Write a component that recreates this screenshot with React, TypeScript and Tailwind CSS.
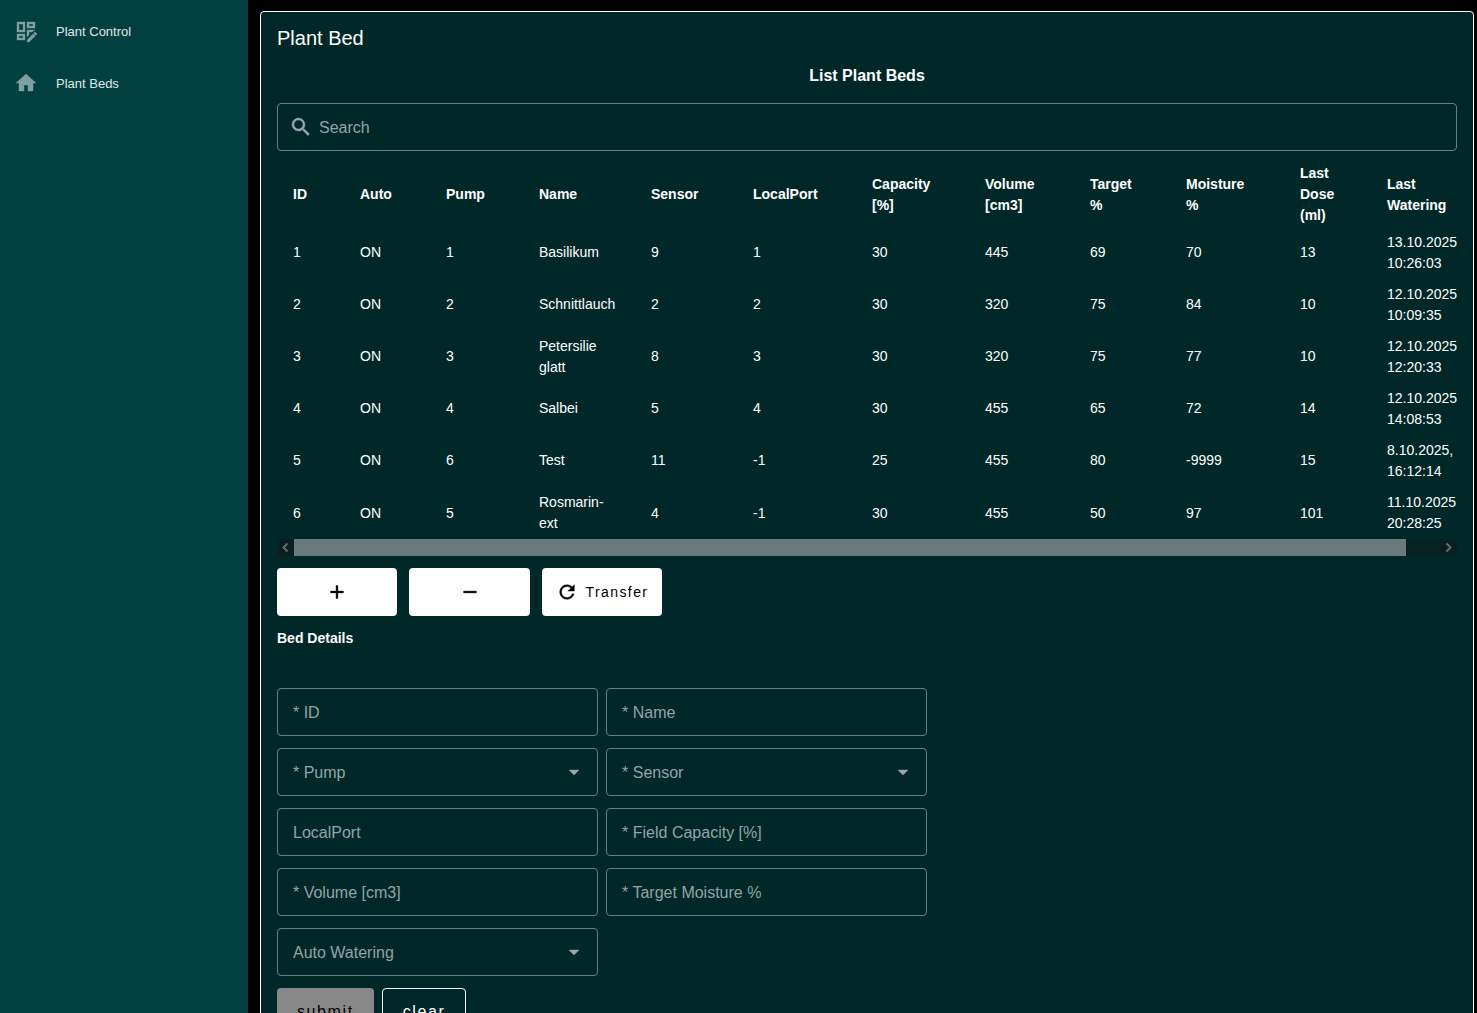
import { useRef } from "react";

const icons = {
  dashboardEdit:
    "M21 13.1c-.1 0-.3.1-.4.2l-1 1 2.1 2.1 1-1c.2-.2.2-.6 0-.8l-1.3-1.3c-.1-.1-.2-.2-.4-.2m-1.9 1.8-6.1 6V23h2.1l6.1-6.1-2.1-2M21 3h-8v6h8V3m-2 4h-4V5h4v2m-6 11.06V11h8v.1c-.76 0-1.43.4-1.81.79L18.07 13H15v3.07l-2 1.99M11 3H3v10h8V3m-2 8H5V5h4v6m2 9.06V15H3v6h8v-.94M9 19H5v-2h4v2Z",
  home: "M10,20V14H14V20H19V12H22L12,3L2,12H5V20H10Z",
  magnify:
    "M9.5,3A6.5,6.5 0 0,1 16,9.5C16,11.11 15.41,12.59 14.44,13.73L14.71,14H15.5L20.5,19L19,20.5L14,15.5V14.71L13.73,14.44C12.59,15.41 11.11,16 9.5,16A6.5,6.5 0 0,1 3,9.5A6.5,6.5 0 0,1 9.5,3M9.5,5C7,5 5,7 5,9.5C5,12 7,14 9.5,14C12,14 14,12 14,9.5C14,7 12,5 9.5,5Z",
  plus: "M19,13H13V19H11V13H5V11H11V5H13V11H19V13Z",
  minus: "M19,13H5V11H19V13Z",
  refresh:
    "M17.65,6.35C16.2,4.9 14.21,4 12,4A8,8 0 0,0 4,12A8,8 0 0,0 12,20C15.73,20 18.84,17.45 19.73,14H17.65C16.83,16.33 14.61,18 12,18A6,6 0 0,1 6,12A6,6 0 0,1 12,6C13.66,6 15.14,6.69 16.22,7.78L13,11H20V4L17.65,6.35Z",
  menuDown: "M7,10L12,15L17,10H7Z",
};

function Icon({ name, className }: { name: keyof typeof icons; className: string }) {
  return (
    <svg viewBox="0 0 24 24" fill="currentColor" stroke="currentColor" strokeWidth="0.4" aria-hidden="true" className={className}>
      <path d={icons[name]} />
    </svg>
  );
}

const columns = [
  { lines: ["ID"], width: "w-[67px]" },
  { lines: ["Auto"], width: "w-[86px]" },
  { lines: ["Pump"], width: "w-[93px]" },
  { lines: ["Name"], width: "w-[112px]" },
  { lines: ["Sensor"], width: "w-[102px]" },
  { lines: ["LocalPort"], width: "w-[119px]" },
  { lines: ["Capacity", "[%]"], width: "w-[113px]" },
  { lines: ["Volume", "[cm3]"], width: "w-[105px]" },
  { lines: ["Target", "%"], width: "w-[96px]" },
  { lines: ["Moisture", "%"], width: "w-[114px]" },
  { lines: ["Last", "Dose", "(ml)"], width: "w-[87px]" },
  { lines: ["Last", "Watering"], width: "w-[122px]" },
];

const beds = [
  ["1", "ON", "1", "Basilikum", "9", "1", "30", "445", "69", "70", "13", "13.10.2025, 10:26:03"],
  ["2", "ON", "2", "Schnittlauch", "2", "2", "30", "320", "75", "84", "10", "12.10.2025, 10:09:35"],
  ["3", "ON", "3", "Petersilie glatt", "8", "3", "30", "320", "75", "77", "10", "12.10.2025, 12:20:33"],
  ["4", "ON", "4", "Salbei", "5", "4", "30", "455", "65", "72", "14", "12.10.2025, 14:08:53"],
  ["5", "ON", "6", "Test", "11", "-1", "25", "455", "80", "-9999", "15", "8.10.2025, 16:12:14"],
  ["6", "ON", "5", "Rosmarin-ext", "4", "-1", "30", "455", "50", "97", "101", "11.10.2025, 20:28:25"],
];

const fields = [
  { id: "bed-id", label: "* ID" },
  { id: "bed-name", label: "* Name" },
  { id: "bed-pump", label: "* Pump", options: ["1", "2", "3", "4", "5", "6"] },
  { id: "bed-sensor", label: "* Sensor", options: ["2", "4", "5", "8", "9", "11"] },
  { id: "bed-port", label: "LocalPort" },
  { id: "bed-capacity", label: "* Field Capacity [%]" },
  { id: "bed-volume", label: "* Volume [cm3]" },
  { id: "bed-target", label: "* Target Moisture %" },
  { id: "bed-auto", label: "Auto Watering", options: ["ON", "OFF"] },
];

function Field({ id, label, options }: { id: string; label: string; options?: string[] }) {
  return (
    <div className="relative h-12 rounded border border-[#667e7e] text-base">
      {options ? (
        <>
          <select
            id={id}
            required
            defaultValue=""
            className="peer h-full w-full appearance-none rounded bg-transparent px-[15px] text-white outline-none"
          >
            <option value="" hidden></option>
            {options.map((o) => (
              <option key={o} className="text-black">
                {o}
              </option>
            ))}
          </select>
          <Icon
            name="menuDown"
            className="pointer-events-none absolute inset-y-0 right-[11px] my-auto size-6 text-[#99a9a9]"
          />
        </>
      ) : (
        <input
          id={id}
          placeholder=" "
          className="peer h-full w-full rounded bg-transparent px-[15px] text-white outline-none"
        />
      )}
      <label
        htmlFor={id}
        className={
          options
            ? "pointer-events-none absolute inset-y-0 left-[15px] flex items-center pt-0.5 text-[#93a4a4] peer-valid:hidden"
            : "pointer-events-none absolute inset-y-0 left-[15px] flex items-center pt-0.5 text-[#93a4a4] peer-[:not(:placeholder-shown)]:hidden"
        }
      >
        {label}
      </label>
    </div>
  );
}

function Chevron({ d }: { d: string }) {
  return (
    <svg viewBox="0 0 17 17" className="size-[17px]" fill="none" stroke="#5f7070" strokeWidth="2" aria-hidden="true">
      <path d={d} />
    </svg>
  );
}

export default function App() {
  const scroller = useRef<HTMLDivElement>(null);
  const scroll = (left: number) => scroller.current?.scrollBy({ left });

  return (
    <div className="flex h-screen overflow-hidden bg-black font-['Liberation_Sans',Arial,sans-serif] text-white">
      <nav className="w-[248px] shrink-0 bg-[#004040] py-[5px] text-[13px] text-[#e0e8e8]">
        <a href="#control" className="flex h-[52px] items-center gap-[18px] pl-[14px]">
          <Icon name="dashboardEdit" className="size-6 text-[#80a0a0]" />
          <span className="pt-0.5">Plant Control</span>
        </a>
        <a href="#beds" className="flex h-[52px] items-center gap-[18px] pl-[14px]">
          <Icon name="home" className="size-6 text-[#80a0a0]" />
          <span className="pt-0.5">Plant Beds</span>
        </a>
      </nav>

      <main className="min-w-0 flex-1 pt-[11px] pr-[3px] pl-3">
        <section className="rounded border border-white bg-[#002828] px-4 pb-4">
          <h1 className="pt-2.5 text-xl leading-8">Plant Bed</h1>
          <h2 className="pt-2.5 text-center text-base leading-6 font-bold">List Plant Beds</h2>

          <label className="mt-[15px] flex h-12 items-center gap-1.5 rounded border border-[#667e7e] px-[11px] text-base">
            <Icon name="magnify" className="size-6 text-[#99a9a9]" />
            <input
              type="search"
              aria-label="Search"
              placeholder="Search"
              className="min-w-0 flex-1 bg-transparent pt-0.5 outline-none placeholder:text-[#93a4a4]"
            />
          </label>

          <div ref={scroller} className="mt-3 overflow-hidden">
            <table className="w-full min-w-[1216px] table-fixed border-separate border-spacing-0 text-left text-sm leading-[21px]">
              <thead>
                <tr>
                  {columns.map((c) => (
                    <th
                      key={c.lines.join(" ")}
                      scope="col"
                      className={`${c.width} border-b border-[#002424] px-4 py-0 align-middle font-bold`}
                    >
                      {c.lines.map((line) => (
                        <span key={line} className="block">
                          {line}
                        </span>
                      ))}
                    </th>
                  ))}
                </tr>
              </thead>
              <tbody>
                {beds.map((bed) => (
                  <tr key={bed[0]} className="group">
                    {bed.map((cell, i) => (
                      <td key={i} className="h-[52px] border-b border-[#002424] px-4 group-last:border-0">
                        {cell}
                      </td>
                    ))}
                  </tr>
                ))}
              </tbody>
            </table>
          </div>
          <div className="flex h-[17px] bg-[#082222]">
            <button type="button" aria-label="Scroll left" onClick={() => scroll(-40)} className="bg-[#0a1f20]">
              <Chevron d="M10.500 4.500 6.500 8.500 10.500 12.500" />
            </button>
            <div className="flex flex-1">
              <div className="w-[97%] bg-[#697a7c]" />
            </div>
            <button type="button" aria-label="Scroll right" onClick={() => scroll(40)} className="bg-[#0a1f20]">
              <Chevron d="M6.500 4.500 10.500 8.500 6.500 12.500" />
            </button>
          </div>

          <div className="mt-3 flex gap-3 text-sm text-black">
            <button type="button" aria-label="Add bed" className="flex h-12 w-[120px] items-center justify-center rounded bg-white">
              <Icon name="plus" className="size-[22px]" />
            </button>
            <button type="button" aria-label="Remove bed" className="flex h-12 w-[121px] items-center justify-center rounded bg-white">
              <Icon name="minus" className="size-[22px]" />
            </button>
            <button type="button" className="flex h-12 w-[120px] items-center justify-center gap-2 rounded bg-white tracking-widest">
              <Icon name="refresh" className="size-[22px]" />
              Transfer
            </button>
          </div>

          <h3 className="mt-3 text-sm leading-5 font-bold">Bed Details</h3>

          <form className="mt-10" onSubmit={(e) => e.preventDefault()}>
            <div className="grid w-[55.1%] grid-cols-2 gap-x-2 gap-y-3">
              {fields.map((f) => (
                <Field key={f.id} {...f} />
              ))}
            </div>
            <div className="mt-3 flex gap-2 text-base tracking-widest">
              <button type="submit" disabled className="h-12 rounded bg-[#888888] px-5 text-black">
                submit
              </button>
              <button type="reset" className="h-12 rounded border border-white px-5">
                clear
              </button>
            </div>
          </form>
        </section>
      </main>
    </div>
  );
}
